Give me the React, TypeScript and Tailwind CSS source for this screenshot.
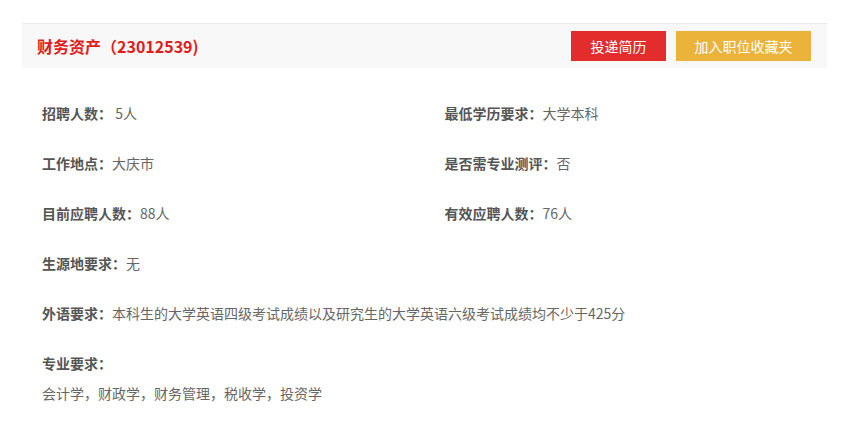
export default function App() {
    const rows: [string, string][][] = [
        [["招聘人数：", " 5人"], ["最低学历要求：", "大学本科"]],
        [["工作地点：", "大庆市"], ["是否需专业测评：", "否"]],
        [["目前应聘人数：", "88人"], ["有效应聘人数：", "76人"]],
    ];

    return (
        <div className="w-[841px] h-[421px] bg-white pl-[22px] pr-[14px] pt-[23px] font-['Noto_Sans_CJK_SC',sans-serif]">
            <div className="h-[45px] border-t border-[#ececec] bg-[#f8f8f8] flex items-center justify-between pl-[15px] pr-[16px]">
                <h2 className="text-[16px] font-bold text-[#e31b1b]">财务资产（23012539)</h2>
                <div className="flex items-center gap-[10px]">
                    <button className="w-[95px] h-[30px] bg-[#e32d2d] text-white text-[14px]">投递简历</button>
                    <button className="w-[135px] h-[30px] bg-[#ebb33a] text-white text-[14px]">加入职位收藏夹</button>
                </div>
            </div>

            <div className="pt-[20px] text-[14px] leading-[20px] text-[#666]">
                {rows.map((row, i) => (
                    <div key={i} className="grid grid-cols-2 h-[50px] items-center">
                        {row.map(([label, value]) => (
                            <div key={label} className="pl-[20px]">
                                <span className="font-bold text-[#555]">{label}</span>
                                <span className="whitespace-pre">{value}</span>
                            </div>
                        ))}
                    </div>
                ))}
                <div className="h-[50px] flex items-center pl-[20px]">
                    <span className="font-bold text-[#555]">生源地要求：</span>
                    <span>无</span>
                </div>
                <div className="h-[50px] flex items-center pl-[20px]">
                    <span className="font-bold text-[#555]">外语要求：</span>
                    <span>本科生的大学英语四级考试成绩以及研究生的大学英语六级考试成绩均不少于425分</span>
                </div>
                <div className="pl-[20px] pt-[15px]">
                    <div className="font-bold text-[#555]">专业要求：</div>
                    <div className="mt-[10px]">会计学，财政学，财务管理，税收学，投资学</div>
                </div>
            </div>
        </div>
    )
}
